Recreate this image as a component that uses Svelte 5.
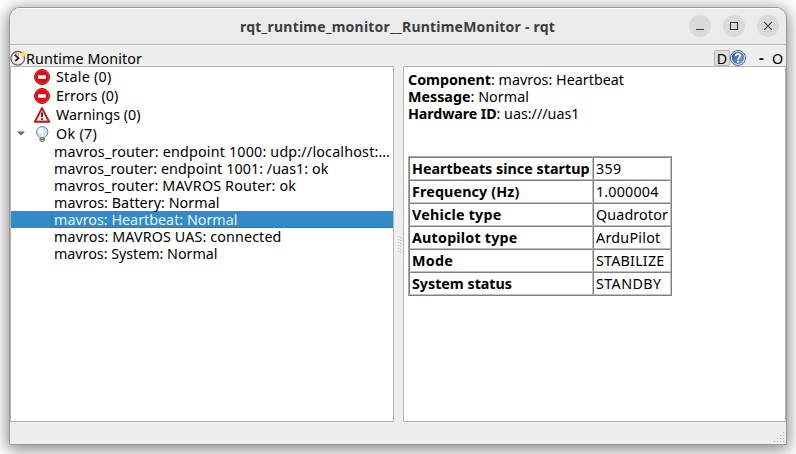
<script>
  const groups = [
    { icon: 'stop', label: 'Stale (0)', w: 55.5 },
    { icon: 'stop', label: 'Errors (0)', w: 62.5 },
    { icon: 'warn', label: 'Warnings (0)', w: 84.5 },
    { icon: 'bulb', label: 'Ok (7)', w: 41, open: true }
  ];
  const items = [
    { label: 'mavros_router: endpoint 1000: udp://localhost:…', w: 336 },
    { label: 'mavros_router: endpoint 1001: /uas1: ok', w: 274.5 },
    { label: 'mavros_router: MAVROS Router: ok', w: 242 },
    { label: 'mavros: Battery: Normal', w: 165.5 },
    { label: 'mavros: Heartbeat: Normal', w: 183.5, selected: true },
    { label: 'mavros: MAVROS UAS: connected', w: 227.5 },
    { label: 'mavros: System: Normal', w: 163.5 }
  ];
  const details = [
    { key: 'Component', kw: 83, value: ': mavros: Heartbeat', vw: 133 },
    { key: 'Message', kw: 62.5, value: ': Normal', vw: 58.5 },
    { key: 'Hardware ID', kw: 88.5, value: ': uas:///uas1', vw: 83 }
  ];
  const rows = [
    ['Heartbeats since startup', 177.5, '359', 25.5],
    ['Frequency (Hz)', 107.5, '1.000004', 62.5],
    ['Vehicle type', 89.5, 'Quadrotor', 72],
    ['Autopilot type', 105.5, 'ArduPilot', 64.5],
    ['Mode', 41, 'STABILIZE', 68.5],
    ['System status', 100, 'STANDBY', 65.5]
  ];

  // Spreads the letters of a label so that it takes the given width.
  function fit(node, width) {
    node.style.letterSpacing = '0px';
    const natural = node.getBoundingClientRect().width;
    node.style.letterSpacing = `${(width - natural) / node.textContent.length}px`;
  }
</script>

<div class="desktop">
  <div class="window">
    <header class="titlebar">
      <span class="title"><b use:fit={315}>rqt_runtime_monitor__RuntimeMonitor - rqt</b></span>
      <div class="controls">
        <i><svg viewBox="0 0 22 22"><path d="M7 14.5h8" /></svg></i>
        <i><svg viewBox="0 0 22 22"><path d="M7.5 7.5h7v7h-7z" /></svg></i>
        <i><svg viewBox="0 0 22 22"><path d="M7.2 7.2l7.6 7.6M14.8 7.2l-7.6 7.6" /></svg></i>
      </div>
    </header>

    <div class="dockbar">
      <svg class="app" viewBox="0 0 16 16">
        <circle cx="7.7" cy="8.3" r="6.8" fill="#f8f6f8" stroke="#70527c" stroke-width="1.3" />
        <circle cx="7.7" cy="8.3" r="5.5" fill="none" stroke="#d5cbd8" stroke-width=".8" />
        <path d="M5 3h4v4.5L5 5z" fill="#dfc66a" />
        <path d="M4.6 4.8l4 3.4-3.4 2.9" fill="none" stroke="#171717" stroke-width="1.6" />
        <path d="M13.5 1v5M11 3.5h5M11.9 1.9l3.2 3.2M15.1 1.9l-3.2 3.2" stroke="#f4e92d" stroke-width="1.1" />
      </svg>
      <span class="dock-name"><span use:fit={116}>Runtime Monitor</span></span>
      <span class="dee">D</span>
      <svg class="help" viewBox="0 0 16 16">
        <defs>
          <linearGradient id="hb" x1="0" y1="0" x2="1" y2="1">
            <stop offset="0" stop-color="#2c5794" /><stop offset="1" stop-color="#7fa5d8" />
          </linearGradient>
        </defs>
        <circle cx="8" cy="8" r="7.5" fill="#fff" stroke="#315f9f" />
        <circle cx="8" cy="8" r="6.2" fill="url(#hb)" />
        <path d="M5.6 6.2C5.7 3.2 10.4 3.3 10.3 6 10.2 7.6 8.2 7.6 8.1 9.6M8.1 10.8v1.8" fill="none" stroke="#fff" stroke-width="1.8" />
      </svg>
      <b class="dash">-</b>
      <span class="oh">O</span>
    </div>

    <main>
      <section class="pane tree">
        {#each groups as g}
          <div class="group">
            <span class="twist">
              {#if g.open}<svg viewBox="0 0 8 5"><path d="M0 .5h8L4 4.6z" fill="#686868" /></svg>{/if}
            </span>
            <svg class="icon" viewBox="0 0 16 16">
              {#if g.icon === 'stop'}
                <circle cx="8" cy="8" r="7.5" fill="#d90d12" stroke="#b5060b" />
                <circle cx="8" cy="8" r="6.7" fill="none" stroke="#ec5457" stroke-width=".6" />
                <rect x="4" y="6.3" width="8" height="3.4" rx=".4" fill="#fff" />
              {:else if g.icon === 'warn'}
                <path d="M8 1.1L15.1 14.8H.9z" fill="#f3f3f3" stroke="#b41418" stroke-width="1.9" stroke-linejoin="round" />
                <path d="M8 3.4L13.3 13.6H2.7z" fill="none" stroke="#ee8688" stroke-width=".5" />
                <path d="M8 5.4v4.8M8 11.2v1.8" stroke="#333" stroke-width="1.9" />
              {:else}
                <circle cx="8.2" cy="6.2" r="5.7" fill="#cfdff5" stroke="#72829f" />
                <path d="M5.3 9.8h5.8l-.8 2.2H6.1z" fill="#dbe5f5" />
                <ellipse cx="6.8" cy="4.5" rx="2.7" ry="2.6" fill="#fff" opacity=".85" />
                <path d="M8.2 6v5" stroke="#fff" stroke-width="1.4" />
                <path d="M6 11.8h4.4v2.4L9.2 15.6h-2L6 14.2z" fill="#c9c38d" stroke="#5f5c44" stroke-width=".8" />
                <path d="M6 13.3h4.4" stroke="#5e5b43" stroke-width=".8" />
              {/if}
            </svg>
            <span use:fit={g.w}>{g.label}</span>
          </div>
        {/each}
        {#each items as it}
          <div class="item" class:selected={it.selected}>
            <div class="cell"><span use:fit={it.w}>{it.label}</span></div>
          </div>
        {/each}
      </section>

      <div class="splitter">
        <svg viewBox="0 0 4 17">
          {#each [0, 3, 6, 9, 12, 15] as y}
            <rect x="0" {y} width="1" height="1" /><rect x="2" y={y + 1} width="1" height="1" />
          {/each}
        </svg>
      </div>

      <section class="pane info">
        {#each details as d}
          <p><b use:fit={d.kw}>{d.key}</b><span use:fit={d.vw}>{d.value}</span></p>
        {/each}
        <div class="table">
          {#each rows as [key, kw, value, vw]}
            <div class="row">
              <div class="th"><b use:fit={kw}>{key}</b></div>
              <div class="td"><span use:fit={vw}>{value}</span></div>
            </div>
          {/each}
        </div>
      </section>
    </main>

    <footer>
      <svg viewBox="0 0 12 12">
        {#each [[9, 0], [6, 3], [9, 3], [3, 6], [6, 6], [9, 6], [0, 9], [3, 9], [6, 9], [9, 9]] as [x, y]}
          <rect {x} {y} width="1" height="1" />
        {/each}
      </svg>
    </footer>
  </div>
</div>

<style>
  .desktop {
    box-sizing: border-box;
    width: 796px;
    height: 454px;
    padding: 7px 9px 9px;
    overflow: hidden;
    background: #fff;
    font: 14.3px/17px 'Noto Sans', sans-serif;
    color: #000;
    white-space: nowrap;
  }
  .window {
    box-sizing: border-box;
    width: 778px;
    height: 438px;
    display: flex;
    flex-direction: column;
    border: 1px solid #999;
    border-radius: 11px 11px 0 0;
    background: #eee;
    box-shadow: 0 3px 15px 2px rgba(0, 0, 0, 0.46);
    overflow: hidden;
  }
  .titlebar {
    box-sizing: border-box;
    flex: none;
    height: 37px;
    display: flex;
    align-items: center;
    justify-content: flex-end;
    background: #ebebeb;
    border-top: 1px solid #fff;
    border-bottom: 1px solid #bababa;
  }
  .title {
    flex: 1;
    padding-left: 230px;
    color: #3d3d3d;
    font-size: 14px;
  }
  .title b { font-weight: 700; }
  .controls {
    display: flex;
    gap: 12px;
    padding: 0 7px 1px 0;
  }
  .controls i, .controls svg {
    display: block;
    width: 22px;
    height: 22px;
  }
  .controls i {
    border-radius: 50%;
    background: #dadada;
  }
  .controls path {
    fill: none;
    stroke: #3d3d3d;
    stroke-width: 1.1;
  }
  .dockbar {
    flex: none;
    height: 21px;
    display: flex;
    align-items: center;
  }
  .dockbar svg {
    width: 16px;
    height: 16px;
    margin-top: 5px;
  }
  .dockbar span, .dockbar b { margin-top: 5px; }
  .dock-name { flex: 1; }
  .dockbar .dock-name span { margin-top: 0; }
  .dockbar .dee {
    box-sizing: border-box;
    width: 16px;
    height: 16px;
    border: 1px solid #b4b4b4;
    border-radius: 2px;
    background: #dedede;
    text-align: center;
    line-height: 15px;
  }
  .dockbar .dash { margin-left: 13px; width: 5px; font-size: 15px; margin-top: 4px; }
  .dockbar .oh { width: 12px; margin-left: 8px; margin-right: 2px; }
  main {
    flex: none;
    height: 356px;
    display: flex;
  }
  .pane {
    box-sizing: border-box;
    border: 1px solid #b5b5b5;
    background: #fff;
    overflow: hidden;
  }
  .tree { width: 384px; }
  .group {
    height: 19px;
    display: flex;
    align-items: center;
  }
  .twist {
    width: 23px;
    display: flex;
  }
  .twist svg { width: 8px; height: 5px; margin-left: 6px; }
  .icon { width: 16px; height: 16px; margin-right: 6px; }
  .item {
    height: 17px;
    padding-left: 40px;
  }
  .cell { padding-left: 3px; height: 17px; box-sizing: border-box; }
  .cell span, p b, p span, .th b, .td span, .dock-name span {
    display: inline-block;
    height: 17px;
    vertical-align: top;
  }
  .selected { background: #308cc6; color: #e9f3fa; }
  .selected .cell { box-shadow: inset 1px 0 #2a7db1, inset 0 -1px #2a7db1; }
  .splitter {
    box-sizing: border-box;
    width: 9px;
    padding-left: 2px;
    display: flex;
    align-items: center;
    justify-content: center;
  }
  .splitter svg { width: 4px; height: 17px; fill: #b2b2b2; }
  .info {
    flex: 1;
    padding: 4px 0 0 4px;
  }
  p { margin: 0; height: 17px; }
  .table {
    box-sizing: border-box;
    width: 264px;
    height: 140px;
    margin-top: 34px;
    border: 1px solid;
    border-color: #a8a8a8 #808080 #808080 #a8a8a8;
  }
  .row { display: flex; height: 23px; }
  .th, .td {
    box-sizing: border-box;
    height: 23px;
    border: 1px solid;
    border-color: #808080 #c0c0c0 #c0c0c0 #808080;
    padding: 2px 0 0 2px;
  }
  .th { width: 184px; }
  .td { width: 78px; }
  footer {
    flex: 1;
    display: flex;
    align-items: flex-end;
    justify-content: flex-end;
  }
  footer svg { width: 12px; height: 12px; fill: #b0b0b0; }
</style>
